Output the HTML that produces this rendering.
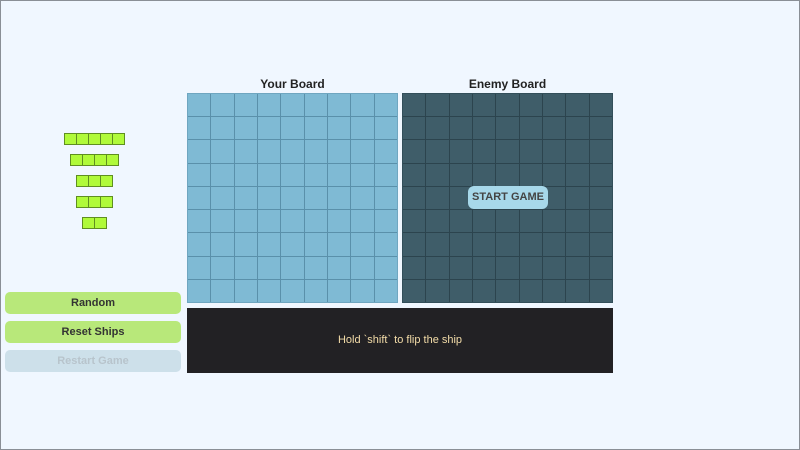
<!DOCTYPE html>
<html><head><style>
body{margin:0;width:800px;height:450px;background:#f0f7ff;font-family:"Liberation Sans",sans-serif;position:relative;overflow:hidden}
.frame{position:absolute;left:0;top:0;width:798px;height:448px;border:1px solid #8a8f96}
.title{position:absolute;top:77px;font-weight:bold;font-size:12px;color:#222;text-align:center}
.board{position:absolute;top:93px;width:211px;height:210px;display:grid;grid-template-columns:repeat(9,1fr);grid-template-rows:repeat(9,1fr);gap:1px;box-sizing:border-box;border:1px solid}
.you{background:#5a90aa;border-color:#6fa6c0}
.you div{background:#7fbad4}
.en{background:#2c444e;border-color:#334f5a}
.en div{background:#3f5d69}
.ship{position:absolute;display:flex;height:12px}
.ship div{width:11px;height:10px;background:#b0fa3a;border:1px solid #5f8f20;margin-right:-1px}
.btn{position:absolute;left:5px;width:176px;height:22px;border-radius:5px;font-size:11px;font-weight:bold;text-align:center;line-height:22px}
.g{background:#b8e87a;color:#333}
</style></head><body>
<div class="frame"></div>
<div class="title" style="left:187px;width:211px">Your Board</div>
<div class="title" style="left:402px;width:211px">Enemy Board</div>
<div class="board you" style="left:187px" id="a"></div>
<div class="board en" style="left:402px" id="b"></div>
<div style="position:absolute;left:468px;top:186px;width:80px;height:23px;background:#a7d8ea;border-radius:6px;font-size:11px;font-weight:bold;color:#444;text-align:center;line-height:23px">START GAME</div>
<div style="position:absolute;left:187px;top:308px;width:426px;height:65px;background:#222124;color:#f3dca8;font-size:11px;text-align:center;line-height:65px">Hold `shift` to flip the ship</div>
<div class="ship" style="left:64px;top:133px"><div></div><div></div><div></div><div></div><div></div></div>
<div class="ship" style="left:70px;top:154px"><div></div><div></div><div></div><div></div></div>
<div class="ship" style="left:76px;top:175px"><div></div><div></div><div></div></div>
<div class="ship" style="left:76px;top:196px"><div></div><div></div><div></div></div>
<div class="ship" style="left:82px;top:217px"><div></div><div></div></div>
<div class="btn g" style="top:292px">Random</div>
<div class="btn g" style="top:321px">Reset Ships</div>
<div class="btn" style="top:350px;background:#cde0ea;color:#b8c4cc">Restart Game</div>
<script>
for(const id of ['a','b']){const e=document.getElementById(id);for(let i=0;i<81;i++)e.appendChild(document.createElement('div'));}
</script>
</body></html>
